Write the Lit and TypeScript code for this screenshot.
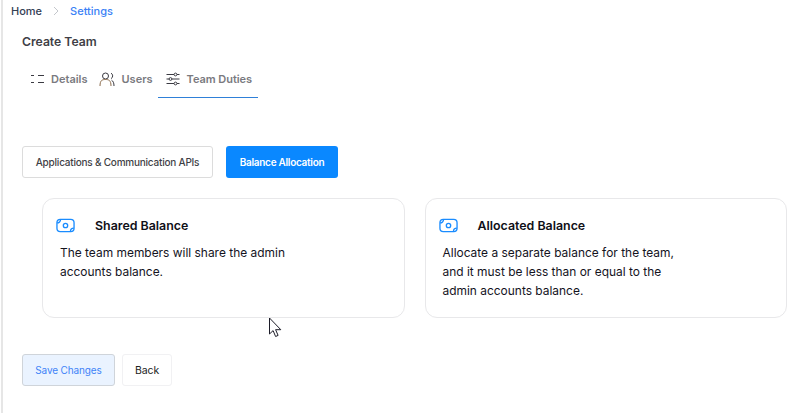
import { LitElement, html, css } from "lit";
import { customElement } from "lit/decorators.js";

const money = html`<svg class="money" viewBox="0 0 20 15" fill="none" stroke="#1a8cff" stroke-width="1.4">
  <rect x="1" y="1" width="18" height="13" rx="3.500"/>
  <circle cx="10" cy="7.500" r="2.300"/>
  <path d="M1.200 4.800 A3.600 3.600 0 0 0 4.800 1.200"/>
  <path d="M18.800 10.200 A3.600 3.600 0 0 0 15.200 13.800"/>
</svg>`;

@customElement("app-root")
export class AppRoot extends LitElement {
  static styles = css`
    :host { display: block; width: 804px; height: 413px; box-sizing: border-box; border-left: 2px solid #e6e6e6; margin-left: 1px; background: #fff; font-family: Inter, "Liberation Sans", sans-serif; position: relative; overflow: hidden; color: #1c1c28; }
    .crumbs { display: flex; align-items: center; height: 14px; padding: 4px 0 0 8px; font-size: 11px; font-weight: 500; color: #344054; }
    .chev { width: 8px; height: 10px; margin: 0 10px; }
    .link { color: #3b82f6; }
    h1 { margin: 15px 0 0 19px; font-size: 12.2px; line-height: 18px; font-weight: 600; color: #3f3f46; }
    .tabs { display: flex; margin: 9px 0 0 19px; height: 38px; font-size: 11px; font-weight: 600; color: #7a7a80; }
    .tab { display: flex; align-items: center; gap: 6px; height: 38px; box-sizing: border-box; padding: 0 8px; white-space: nowrap; }
    .tab svg { display: block; flex: none; }
    .tab.users { padding-left: 3px; padding-right: 5px; gap: 7px; }
    .tab.active { border-bottom: 1px solid #2f80d8; padding-right: 0; width: 100px; gap: 7px; letter-spacing: -0.05px; }
    .seg { display: flex; gap: 13px; margin: 48px 0 0 19px; }
    .btn { height: 32px; box-sizing: border-box; border-radius: 3px; display: flex; align-items: center; justify-content: center; font-size: 10px; font-weight: 500; }
    .outline { width: 191px; border: 1px solid #dcdcdc; color: #3f3f46; letter-spacing: -0.22px; }
    .primary { width: 112px; background: #0a88ff; color: #fff; font-weight: 600; letter-spacing: -0.28px; }
    .cards { display: flex; gap: 20px; margin: 20px 0 0 39px; }
    .card { width: 362.5px; height: 120px; box-sizing: border-box; border: 1px solid #e8e8ea; border-radius: 12px; padding: 18px 0 0 13px; }
    .card-head { display: flex; align-items: center; height: 17px; font-size: 12.4px; font-weight: 600; color: #101018; }
    .money { width: 19px; height: 15px; margin-right: 20px; flex: none; }
    p { margin: 9px 0 0 4px; width: 250px; font-size: 11.95px; line-height: 19px; color: #14141e; }
    .actions { display: flex; gap: 7px; margin: 36px 0 0 19px; }
    .save { width: 93px; background: #eaf3ff; border: 1px solid #cfd4da; color: #3f83f8; font-weight: 400; letter-spacing: -0.13px; }
    .back { width: 50px; border: 1px solid #f1f1f3; color: #222; font-weight: 400; font-size: 10.5px; letter-spacing: -0.1px; }
    .cursor { position: absolute; left: 265px; top: 317px; width: 15px; height: 21px; }
  `;

  render() {
    return html`
      <div class="crumbs">
        <span>Home</span>
        <svg class="chev" viewBox="0 0 8 10" fill="none" stroke="#c4c7cc" stroke-width="1"><path d="M2 1l4 4-4 4"/></svg>
        <span class="link">Settings</span>
      </div>
      <h1>Create Team</h1>
      <div class="tabs">
        <div class="tab">
          <svg width="15" height="10" viewBox="0 0 15 10" fill="none" stroke="#3a3a42" stroke-width="1"><path d="M1 1.500h3M8 1.500h6M1 8.500h3M8 8.500h6"/></svg>
          Details
        </div>
        <div class="tab users">
          <svg width="16" height="15" viewBox="0 0 16 15" fill="none" stroke-width="1"><circle cx="6.500" cy="4" r="3" stroke="#3a3a42"/><path d="M12 1.200a3 3 0 0 1 0 5.400" stroke="#3a3a42"/><path d="M1 14c0-6 2.500-6.500 5.500-6.500S12 8 12 14" stroke="#8a6a4a"/><path d="M15 14c0-3-.8-5-2.500-5.800" stroke="#3a3a42"/></svg>
          Users
        </div>
        <div class="tab active">
          <svg width="14" height="14" viewBox="0 0 14 14" fill="none" stroke="#3a3a42" stroke-width="1"><path d="M0.500 2.500h7.500M11 2.500h2.500M0.500 7h2.500M6 7h7.500M0.500 11.500h7.500M11 11.500h2.500"/><circle cx="9.500" cy="2.500" r="1.400"/><circle cx="4.500" cy="7" r="1.400"/><circle cx="9.500" cy="11.500" r="1.400"/></svg>
          Team Duties
        </div>
      </div>
      <div class="seg">
        <div class="btn outline">Applications &amp; Communication APIs</div>
        <div class="btn primary">Balance Allocation</div>
      </div>
      <div class="cards">
        <div class="card">
          <div class="card-head">${money}Shared Balance</div>
          <p>The team members will share the admin accounts balance.</p>
        </div>
        <div class="card">
          <div class="card-head">${money}Allocated Balance</div>
          <p>Allocate a separate balance for the team, and it must be less than or equal to the admin accounts balance.</p>
        </div>
      </div>
      <div class="actions">
        <div class="btn save">Save Changes</div>
        <div class="btn back">Back</div>
      </div>
      <svg class="cursor" viewBox="0 0 15 21" fill="#fff" stroke="#1c1c28" stroke-width="1"><path d="M1.500 1v16l3.600-3.400 2.500 5.900 2.500-1.100-2.500-5.700h5.200z"/></svg>
    `;
  }
}
